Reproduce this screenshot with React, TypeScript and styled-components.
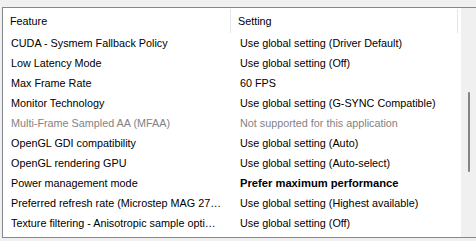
import React from "react";
import styled, { createGlobalStyle } from "styled-components";

type Row = {
  feature: string;
  setting: string;
  disabled?: boolean;
  bold?: boolean;
};

const rows: Row[] = [
  { feature: "CUDA - Sysmem Fallback Policy", setting: "Use global setting (Driver Default)" },
  { feature: "Low Latency Mode", setting: "Use global setting (Off)" },
  { feature: "Max Frame Rate", setting: "60 FPS" },
  { feature: "Monitor Technology", setting: "Use global setting (G-SYNC Compatible)" },
  {
    feature: "Multi-Frame Sampled AA (MFAA)",
    setting: "Not supported for this application",
    disabled: true,
  },
  { feature: "OpenGL GDI compatibility", setting: "Use global setting (Auto)" },
  { feature: "OpenGL rendering GPU", setting: "Use global setting (Auto-select)" },
  { feature: "Power management mode", setting: "Prefer maximum performance", bold: true },
  {
    feature: "Preferred refresh rate (Microstep MAG 27\u2026",
    setting: "Use global setting (Highest available)",
  },
  {
    feature: "Texture filtering - Anisotropic sample opti\u2026",
    setting: "Use global setting (Off)",
  },
];

const App = () => {
  return (
    <>
      <GlobalStyle />
      <Page>
        <Frame>
          <List>
            <Header>
              <HeaderCell $width={228}>Feature</HeaderCell>
              <HeaderCell $width={227}>Setting</HeaderCell>
            </Header>
            <Body>
              {rows.map((row) => (
                <ListRow key={row.feature}>
                  <Cell $width={229} $disabled={row.disabled}>
                    {row.feature}
                  </Cell>
                  <Cell $width={229} $disabled={row.disabled} $bold={row.bold}>
                    {row.setting}
                  </Cell>
                </ListRow>
              ))}
            </Body>
          </List>
          <ScrollTrack>
            <ScrollThumb />
          </ScrollTrack>
        </Frame>
      </Page>
    </>
  );
};

const GlobalStyle = createGlobalStyle`
  html, body {
    margin: 0;
    padding: 0;
    background: #f0f0f0;
    overflow: hidden;
  }
  body {
    font-family: "Liberation Sans", Arial, sans-serif;
    font-size: 10.8px;
    color: #000;
  }
`;

const Page = styled.div`
  width: 476px;
  height: 241px;
  padding: 7px 0 0 2px;
  box-sizing: border-box;
  overflow: hidden;
  background: #f0f0f0;
`;

const Frame = styled.div`
  display: flex;
  width: 477px;
  height: 231px;
  box-sizing: border-box;
  border: 1px solid #828790;
  background: #fff;
`;

const List = styled.div`
  width: 458px;
  display: flex;
  flex-direction: column;
  overflow: hidden;
  background: #fff;
`;

const Header = styled.div`
  display: flex;
  height: 25px;
  flex-shrink: 0;
`;

const HeaderCell = styled.div<{ $width: number }>`
  width: ${(p) => p.$width}px;
  flex-shrink: 0;
  display: flex;
  align-items: center;
  padding: 0 0 1px 7px;
  box-sizing: border-box;
  border-right: 1px solid #e5e5e5;
  margin-top: 1px;
  white-space: nowrap;
`;

const Body = styled.div`
  display: flex;
  flex-direction: column;
`;

const ListRow = styled.div`
  display: flex;
  height: 20px;
  flex-shrink: 0;
`;

const Cell = styled.div<{ $width: number; $disabled?: boolean; $bold?: boolean }>`
  width: ${(p) => p.$width}px;
  flex-shrink: 0;
  display: flex;
  align-items: center;
  padding-left: 8px;
  box-sizing: border-box;
  white-space: nowrap;
  overflow: hidden;
  color: ${(p) => (p.$disabled ? "#838383" : "#000")};
  font-weight: ${(p) => (p.$bold ? 700 : 400)};
  font-size: ${(p) => (p.$bold ? "11.2px" : "inherit")};
`;

const ScrollTrack = styled.div`
  width: 17px;
  flex-shrink: 0;
  background: #f0f0f0;
  padding: 84px 0 0 7px;
  box-sizing: border-box;
`;

const ScrollThumb = styled.div`
  width: 2px;
  height: 80px;
  border-radius: 1px;
  background: #858585;
`;

export default App;
